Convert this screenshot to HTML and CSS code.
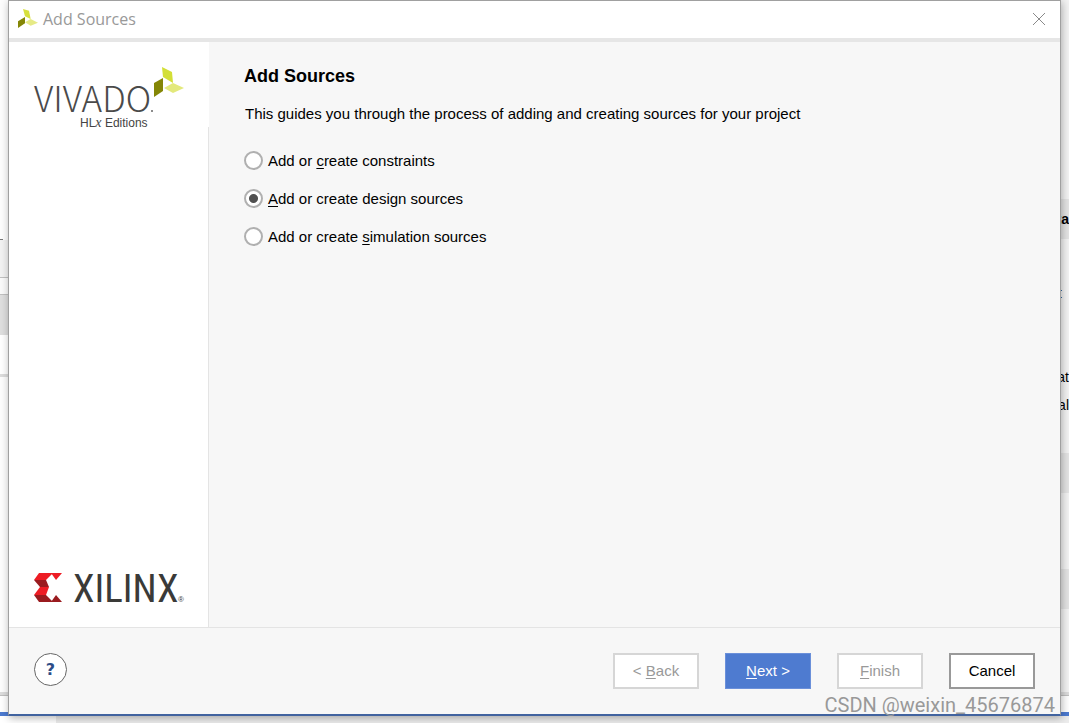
FILE: index.html
```html
<!DOCTYPE html>
<html lang="en">
<head>
  <meta charset="UTF-8">
  <meta name="viewport" content="width=device-width, initial-scale=1.0">
  <title>Add Sources</title>
  <link rel="stylesheet" href="styles.css">
</head>
<body>

<!-- Main window, visible around the dialog -->
<div class="edge edge-left">
  <div class="blank tall-left"></div>
  <div class="dash"></div>
  <div class="toolbar-strip"></div>
  <div class="tab-strip"></div>
  <div class="tab-active"></div>
  <div class="blank white list-strip"></div>
  <div class="splitter"></div>
  <div class="blank grow"></div>
  <div class="splitter lined"></div>
  <div class="status"></div>
</div>

<main class="dialog">
  <header class="titlebar">
    <svg class="app-icon" width="20" height="19" viewBox="0 0 60 57">
      <path d="M15 0 L33 5 L38 30 L21 22 Z" fill="#d6e03d"/>
      <path d="M0 37 L21 24 L21 43 L0 57 Z" fill="#848606"/>
      <path d="M21 40 L38 30 L60 41 L38 50 Z" fill="#e6ea86"/>
    </svg>
    <span class="title">Add Sources</span>
    <button type="button" class="close" aria-label="Close">
      <svg width="14" height="14" viewBox="0 0 14 14">
        <path d="M1 1 L13 13 M13 1 L1 13" stroke="#8a8a8a" fill="none"/>
      </svg>
    </button>
  </header>

  <div class="content">
    <aside class="sidebar">
      <div class="product">
        <svg width="156" height="68" viewBox="0 0 156 68">
          <text class="vivado" x="0" y="46">VIVADO</text>
          <circle cx="118" cy="45" r="1" fill="#666"/>
          <text class="edition" x="46" y="61">HL<tspan class="edition-x">x</tspan> Editions</text>
          <path d="M128 1 L138 6 L139 17 L129 11 Z" fill="#d3df37"/>
          <path d="M120 17 L129 12 L129 25 L120 31 Z" fill="#848606"/>
          <path d="M130 22 L139 17 L150 22 L139 27 Z" fill="#e3e97c"/>
        </svg>
      </div>
      <div class="company">
        <svg width="156" height="34" viewBox="0 0 156 34">
          <path d="M5 1 L19 1 L12 8 L0 8 Z" fill="#ed1c24"/>
          <path d="M17 1 L28 1 L22 8 Z" fill="#ed1c24"/>
          <path d="M0 8 L12 8 L15 15 L6 15 Z" fill="#9a1b1f"/>
          <path d="M6 15 L15 15 L12 23 L0 23 Z" fill="#ed1c24"/>
          <path d="M0 23 L12 23 L19 30 L5 30 Z" fill="#9a1b1f"/>
          <path d="M22 23 L28 30 L17 30 Z" fill="#9a1b1f"/>
          <text class="xilinx" x="39" y="30">XILINX</text>
          <text class="registered" x="144" y="30">®</text>
        </svg>
      </div>
    </aside>

    <section class="panel">
      <h1>Add Sources</h1>
      <p>This guides you through the process of adding and creating sources for your project</p>
      <form class="options">
        <label><input type="radio" name="source"><span>Add or <u>c</u>reate constraints</span></label>
        <label><input type="radio" name="source" checked><span><u>A</u>dd or create design sources</span></label>
        <label><input type="radio" name="source"><span>Add or create <u>s</u>imulation sources</span></label>
      </form>
    </section>
  </div>

  <footer class="actions">
    <button type="button" class="help">?</button>
    <div class="buttons">
      <button type="button" disabled>&lt; <u>B</u>ack</button>
      <button type="button" class="primary"><u>N</u>ext &gt;</button>
      <button type="button" disabled><u>F</u>inish</button>
      <button type="button" class="cancel">Cancel</button>
    </div>
  </footer>
</main>

<div class="edge edge-right">
  <div class="blank tall-right"></div>
  <div class="row shade"><b>ta</b></div>
  <div class="row link-row"><i></i></div>
  <div class="row text-row">at</div>
  <div class="row text-row">al</div>
  <div class="blank gap-first"></div>
  <div class="row shade"></div>
  <div class="blank gap-second"></div>
  <div class="row shade"></div>
  <div class="blank grow"></div>
  <div class="splitter lined"></div>
  <div class="status"></div>
</div>

<div class="desktop"></div>
<div class="watermark">CSDN @weixin_45676874</div>

</body>
</html>
```

FILE: styles.css
```css
* {
  margin: 0;
  padding: 0;
  box-sizing: border-box;
}
body {
  position: relative;
  display: grid;
  grid-template-columns: 8px 1fr 8px;
  grid-template-rows: 1fr 7px;
  min-height: 100vh;
  font-family: "Liberation Sans", Arial, sans-serif;
  font-size: 15px;
  color: #000;
  background: #fff;
  overflow: hidden;
}
u {
  text-underline-offset: 2px;
  text-decoration-thickness: 1px;
}

/* Main window behind the dialog */
.edge {
  display: flex;
  flex-direction: column;
  overflow: hidden;
}
.edge-left {
  background: #fdfdfd;
}
.edge-right {
  background: #f3f3f3;
}
.grow {
  flex: 1;
}
.tall-left {
  height: 239px;
}
.tall-right {
  height: 199px;
}
.dash {
  width: 3px;
  height: 1px;
  background: #777;
}
.toolbar-strip {
  height: 38px;
  background: #f2f2f2;
  border-bottom: 1px solid #c0c0c0;
}
.tab-strip {
  height: 17px;
  background: #fafafa;
  border-bottom: 1px solid #c0c0c0;
}
.tab-active {
  height: 40px;
  background: #dedede;
}
.white {
  background: #fff;
}
.list-strip {
  height: 39px;
}
.splitter {
  height: 3px;
  background: #dcdcdc;
}
.lined {
  height: 4px;
  border-bottom: 1px solid #c0c0c0;
}
.status {
  height: 20px;
  background: #fff;
  border-bottom: 4px solid #4c7ad0;
}
.row {
  display: flex;
  align-items: center;
  justify-content: flex-end;
  height: 40px;
  font-size: 14px;
}
.shade {
  background: #e4e4e4;
}
.text-row {
  height: 28px;
}
.link-row {
  justify-content: flex-start;
  height: 124px;
  padding-bottom: 14px;
}
.link-row i {
  width: 1px;
  height: 8px;
  border-top: 1px solid #3a6ea5;
  border-bottom: 1px solid #3a6ea5;
}
.gap-first {
  height: 34px;
}
.gap-second {
  height: 76px;
}
.desktop {
  grid-column: 1 / -1;
  background: linear-gradient(to right, #fff 56px, #ececec 56px);
}

/* Dialog */
.dialog {
  position: relative;
  z-index: 1;
  display: flex;
  flex-direction: column;
  background: #f7f7f7;
  border: 1px solid #a0a0a0;
  border-bottom: 2px solid #41639f;
  box-shadow: 1px 2px 8px rgba(0, 0, 0, 0.3);
}
.titlebar {
  display: flex;
  align-items: center;
  gap: 5px;
  height: 41px;
  padding: 0 14px 2px 9px;
  background: #fff;
  border-bottom: 4px solid #e6e6e6;
}
.title {
  flex: 1;
  font-family: "Open Sans", "Noto Sans", sans-serif;
  font-size: 16px;
  color: #999;
}
.close {
  display: flex;
  border: none;
  background: none;
}
.content {
  flex: 1;
  display: flex;
}
.sidebar {
  width: 200px;
  display: flex;
  flex-direction: column;
  background: #fff;
}
.product {
  height: 85px;
  padding: 24px 0 0 25px;
  line-height: 0;
}
.company {
  flex: 1;
  display: flex;
  align-items: flex-end;
  padding: 0 0 21px 25px;
  border-right: 1px solid #e4e4e4;
}
svg {
  overflow: visible;
}
.vivado {
  font-family: "Noto Sans CJK SC", Roboto, sans-serif;
  font-size: 35px;
  font-weight: 300;
  fill: #4a4a4a;
}
.edition {
  font-size: 12px;
  fill: #444;
}
.edition-x {
  font-family: "Liberation Serif", serif;
  font-style: italic;
  font-size: 14px;
}
.xilinx {
  font-family: "Roboto Condensed", "Noto Sans CJK SC", sans-serif;
  font-size: 39px;
  fill: #3a3a38;
}
.registered {
  font-size: 8px;
  fill: #3a3a38;
}
.panel {
  flex: 1;
  padding: 24px 35px;
}
.panel h1 {
  margin-bottom: 18px;
  font-size: 18px;
  line-height: 20px;
}
.panel p {
  margin-bottom: 27px;
  padding-left: 1px;
  line-height: 20px;
}
.options {
  display: flex;
  flex-direction: column;
  gap: 20px;
}
.options label {
  display: flex;
  align-items: center;
  gap: 5px;
  height: 18px;
}
.options input {
  appearance: none;
  width: 19px;
  height: 19px;
  border: 2px solid #b0b0b0;
  border-radius: 50%;
  background: #fff;
}
.options input:checked {
  background: radial-gradient(circle, #505050 4px, #fff 5px);
}

/* Footer buttons */
.actions {
  display: flex;
  align-items: flex-start;
  justify-content: space-between;
  padding: 25px;
  border-top: 1px solid #e4e4e4;
}
.buttons {
  display: flex;
  gap: 26px;
}
.buttons button {
  width: 86px;
  height: 36px;
  padding-bottom: 2px;
  border: 2px solid #d6d6d6;
  background: #fff;
  font: inherit;
  color: #000;
}
.buttons button:disabled {
  color: #999;
}
.buttons .primary {
  border: 1px solid #6b90da;
  background: #4e7bd0;
  color: #fff;
}
.buttons .cancel {
  border-color: #999;
}
.help {
  width: 33px;
  height: 33px;
  border: 1px solid #666;
  border-radius: 50%;
  background: #fff;
  font-family: "DejaVu Sans", sans-serif;
  font-size: 16px;
  font-weight: bold;
  color: #2d4d87;
}

.watermark {
  position: absolute;
  z-index: 2;
  right: 14px;
  bottom: 6px;
  font-family: Roboto, sans-serif;
  font-size: 20px;
  line-height: 24px;
  color: #999;
}
```
